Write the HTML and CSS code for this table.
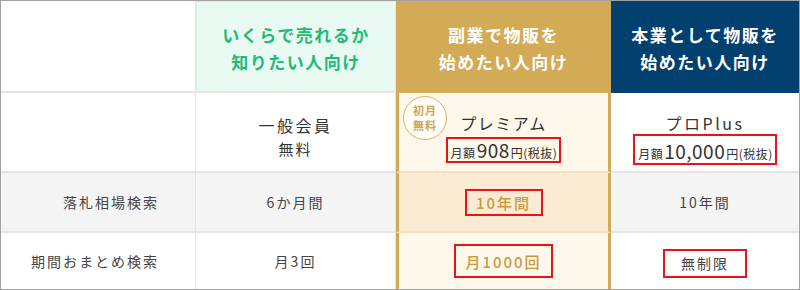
FILE: index.html
```html
<!DOCTYPE html>
<html lang="ja">
<head>
<meta charset="utf-8">
<link rel="stylesheet" href="styles.css">
</head>
<body>
<div class="table">
  <div class="cell head blank"></div>
  <div class="cell head mint"><span>いくらで売れるか</span><span>知りたい人向け</span></div>
  <div class="cell head gold"><span>副業で物販を</span><span>始めたい人向け</span></div>
  <div class="cell head navy"><span>本業として物販を</span><span>始めたい人向け</span></div>

  <div class="cell plan label-cell"></div>
  <div class="cell plan sep"><span class="pname">一般会員</span><span class="free">無料</span></div>
  <div class="cell plan prem prem-plan">
    <div class="badge"><span class="bl">初月</span><span class="bl">無料</span></div>
    <span class="pname prem-name">プレミアム</span>
    <span class="price red small-box"><span class="sm">月額</span><span class="num">908</span><span class="sm">円(税抜)</span></span>
  </div>
  <div class="cell plan"><span class="pname pro-name">プロPlus</span>
    <span class="price red big-box"><span class="sm">月額</span><span class="num">10,000</span><span class="sm">円(税抜)</span></span>
  </div>

  <div class="cell row gray label">落札相場検索</div>
  <div class="cell row gray sep val">6か月間</div>
  <div class="cell row prem peach"><span class="red gtext box3">10年間</span></div>
  <div class="cell row gray val">10年間</div>

  <div class="cell row last label">期間おまとめ検索</div>
  <div class="cell row last sep val">月3回</div>
  <div class="cell row last prem cream"><span class="red gtext box4">月1000回</span></div>
  <div class="cell row last val"><span class="red box5">無制限</span></div>
</div>
</body>
</html>
```

FILE: styles.css
```css
html, body {
  margin: 0;
  padding: 0;
  background: #fff;
}
body {
  font-family: "Noto Sans CJK JP", "Noto Sans", sans-serif;
  color: #333;
}
.table {
  width: 800px;
  height: 290px;
  box-sizing: border-box;
  border: 1px solid #a2a2a2;
  display: grid;
  grid-template-columns: 195px 200px 215px 1fr;
  grid-template-rows: 92px 80px 60px 1fr;
}
.cell {
  box-sizing: border-box;
  display: flex;
  flex-direction: column;
  align-items: center;
  justify-content: center;
  border-bottom: 2px solid #e5e5e5;
  position: relative;
}
.head {
  font-size: 17px;
  font-weight: 700;
  line-height: 27px;
  letter-spacing: 1.5px;
  padding-top: 2px;
}
.blank {
  border-right: 1px solid #e5e5e5;
}
.mint {
  background: #e9faf3;
  color: #1fbb79;
  border: 1px solid #d8efe5;
  border-bottom: 2px solid #e5e5e5;
}
.gold {
  background: #d3aa56;
  color: #fff;
  border-bottom: none;
}
.navy {
  background: #02416f;
  color: #fff;
  border-bottom: none;
}
.sep {
  border-right: 1px solid #e5e5e5;
}
.label-cell {
  border-right: 1px solid #e5e5e5;
}
.plan {
  justify-content: flex-start;
  padding-top: 20px;
}
.pname {
  font-size: 16px;
  letter-spacing: 2.5px;
  line-height: 24px;
  color: #333;
}
.free {
  font-size: 15px;
  letter-spacing: 2px;
  line-height: 24px;
  color: #333;
}
.prem {
  border-left: 3px solid #d3aa56;
  border-right: 3px solid #d3aa56;
}
.prem-plan {
  background: #fef8eb;
  border-bottom: 2px solid #f3e3c4;
  padding-top: 18px;
}
.prem-name {
  letter-spacing: 1.5px;
  margin-bottom: 2px;
}
.pro-name {
  padding-top: 0;
  margin-top: -2px;
}
.badge {
  position: absolute;
  left: 4px;
  top: 3px;
  width: 44px;
  height: 44px;
  box-sizing: border-box;
  border: 1px solid #dab36a;
  border-radius: 50%;
  background: #fffdf7;
  display: flex;
  flex-direction: column;
  align-items: center;
  justify-content: center;
  color: #cfa456;
  font-size: 11px;
  font-weight: 700;
  letter-spacing: 1px;
}
.bl {
  display: block;
  height: 15px;
  line-height: 15px;
}
.red {
  border: 2px solid #e8141c;
  box-sizing: border-box;
}
.price {
  display: inline-flex;
  align-items: baseline;
  color: #333;
}
.price .sm {
  font-size: 12px;
  letter-spacing: 0.5px;
}
.price .num {
  font-size: 19px;
  letter-spacing: 0.5px;
  margin: 0 1px;
}
.small-box {
  padding: 0 2px 0 3px;
  height: 26px;
  line-height: 22px;
}
.big-box {
  padding: 2px 2px 2px 3px;
  height: 31px;
  line-height: 25px;
  margin-top: -1px;
}
.row {
  font-size: 14px;
  letter-spacing: 2px;
  color: #444;
}
.label {
  align-items: flex-end;
  padding-right: 36px;
  border-right: 1px solid #e5e5e5;
}
.gray {
  background: #f4f4f4;
}
.peach {
  background: #fbebd2;
  border-bottom: 2px solid #f4e3c6;
}
.cream {
  background: #fef8ec;
}
.last {
  border-bottom: none;
}
.gtext {
  color: #c99a40;
  font-size: 15px;
  font-weight: 500;
}
.box3 {
  width: 78px;
  height: 27px;
  display: flex;
  align-items: center;
  justify-content: center;
}
.box4 {
  width: 99px;
  height: 34px;
  display: flex;
  align-items: center;
  justify-content: center;
}
.box5 {
  width: 84px;
  height: 29px;
  display: flex;
  align-items: center;
  justify-content: center;
  margin-top: 4px;
}
```
